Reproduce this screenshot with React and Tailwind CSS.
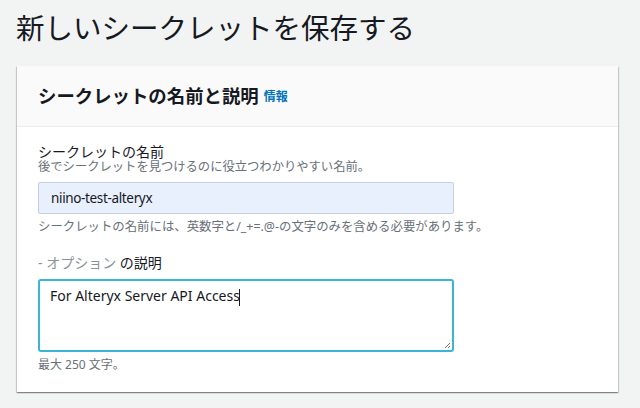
export default function App() {
  const font = { fontFamily: '"Noto Sans", "Noto Sans CJK JP", sans-serif' };
  return (
    <div className="w-[640px] h-[408px] bg-[#f2f3f3] overflow-hidden" style={font}>
      <h1 className="pl-[16px] pt-[10px] h-[46px] text-[28.5px] leading-[36px] font-normal text-[#16191f]">
        新しいシークレットを保存する
      </h1>
      <div className="ml-[17px] mt-[20px] w-[601px] h-[326px] bg-white shadow-[0_1px_1px_0_rgba(0,28,36,0.3),1px_1px_1px_0_rgba(0,28,36,0.15),-1px_1px_1px_0_rgba(0,28,36,0.15)]">
        <div className="h-[61px] flex items-center px-[21px] bg-[#fafafa] border-b border-[#eaeded]">
          <span className="text-[18.4px] font-bold text-[#16191f] leading-[24px]">シークレットの名前と説明</span>
          <span className="ml-[5px] text-[12px] font-bold text-[#0073bb] leading-[24px] pt-[2px]">情報</span>
        </div>
        <div className="px-[21px] pt-[17px]">
          <div className="text-[14px] leading-[16px] text-[#16191f]">シークレットの名前</div>
          <div className="text-[12.3px] leading-[14px] text-[#687078]">後でシークレットを見つけるのに役立つわかりやすい名前。</div>
          <div className="mt-[8px] w-[416px] h-[32px] bg-[#e8f0fe] border border-[#c6d0da] rounded-[2px] flex items-center pl-[12px] text-[13.5px] tracking-[-0.35px] text-[#16191f]">
            niino-test-alteryx
          </div>
          <div className="mt-[5px] text-[12.4px] leading-[16px] text-[#687078]">
            シークレットの名前には、英数字と/_+=.@-の文字のみを含める必要があります。
          </div>
          <div className="mt-[19px] text-[14px] leading-[18px] text-[#16191f]">
            <span className="text-[#879596]">- オプション</span> の説明
          </div>
          <div className="relative mt-[7px] w-[416px] h-[73px] border-2 border-[#3bb4d6] rounded-[3px] pl-[10px] pt-[5px] text-[14px] leading-[20px] text-[#16191f]">
            <span>For Alteryx Server API Access</span>
            <span className="inline-block w-[1px] h-[17px] bg-[#16191f] align-middle -ml-[1px]"></span>
            <svg className="absolute right-[1px] bottom-[1px]" width="8" height="8" viewBox="0 0 8 8">
              <path d="M7 2 L2 7 M7 5 L5 7" stroke="#777" strokeWidth="1" />
            </svg>
          </div>
          <div className="mt-[5px] text-[12px] leading-[16px] text-[#687078]">最大 250 文字。</div>
        </div>
      </div>
    </div>
  );
}
